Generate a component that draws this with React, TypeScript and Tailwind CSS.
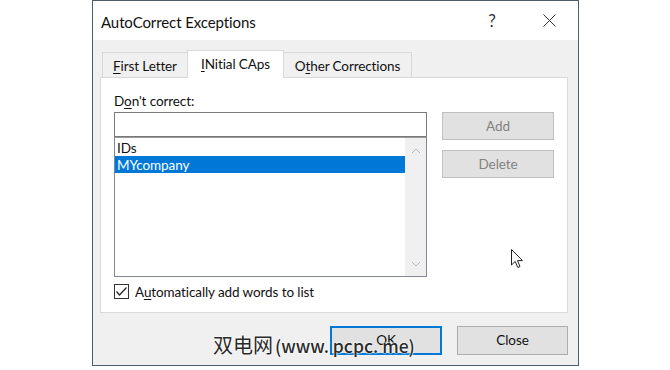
import React from "react";

const Chevron = ({ up }: { up?: boolean }) => (
  <svg width="10" height="6" viewBox="0 0 10 6">
    <polyline
      points={up ? "1,5 5,1 9,5" : "1,1 5,5 9,1"}
      fill="none"
      stroke="#b4b4b4"
      strokeWidth="1"
    />
  </svg>
);

export default function App() {
  return (
    <div
      className="w-[670px] h-[370px] bg-white relative overflow-hidden text-[#111]"
      style={{ fontFamily: 'Lato, "Open Sans", sans-serif' }}
    >
      <div className="ml-[92px] w-[487px] h-[366px] border border-[#4f5d6a] flex flex-col">
        {/* title bar */}
        <div className="h-[39px] bg-white flex items-center pl-[8px] shrink-0">
          <span className="text-[15px] leading-[20px] mt-[2px] tracking-[-0.1px]">AutoCorrect Exceptions</span>
          <div className="ml-auto flex items-center h-full pr-[6px]">
            <div className="w-[46px] h-full flex items-center justify-center text-[17px] text-[#333] pt-[1px]">
              ?
            </div>
            <div className="w-[11px]" />
            <div className="w-[46px] h-full flex items-center justify-center">
              <svg width="13" height="13" viewBox="0 0 13 13">
                <path d="M0.5 0.5 L12.5 12.5 M12.5 0.5 L0.5 12.5" stroke="#333" strokeWidth="1" fill="none" />
              </svg>
            </div>
          </div>
        </div>
        {/* body */}
        <div className="flex-1 bg-[#f0f0f0] pt-[10px] pl-[7px] pr-[10px] pb-[10px] flex flex-col text-[13.5px] tracking-[-0.1px]">
          {/* tabs */}
          <div className="h-[27px] flex items-start pl-[2px] shrink-0">
            <div className="mt-[2px] h-[25px] w-[86px] border border-b-0 border-[#d9d9d9] bg-[#f0f0f0] flex items-center justify-center pt-[3px]">
              <span>
                <span className="underline underline-offset-2">F</span>irst Letter
              </span>
            </div>
            <div className="-ml-px h-[28px] w-[97px] border border-b-0 border-[#d9d9d9] bg-white flex items-center justify-center relative z-10">
              <span>
                <span className="underline underline-offset-2">I</span>Nitial CAps
              </span>
            </div>
            <div className="-ml-px mt-[2px] h-[25px] w-[129px] border border-b-0 border-[#d9d9d9] bg-[#f0f0f0] flex items-center justify-center pt-[3px]">
              <span>
                O<span className="underline underline-offset-2">t</span>her Corrections
              </span>
            </div>
          </div>
          {/* panel */}
          <div className="h-[236px] bg-white border border-[#d9d9d9] flex items-start pl-[13px] pt-[12px] shrink-0">
            <div className="w-[313px] flex flex-col">
              <div className="h-[22px] leading-[22px]">
                D<span className="underline underline-offset-2">o</span>n't correct:
              </div>
              <div className="h-[25px] border border-[#7a7a7a] bg-white" />
              <div className="h-[140px] border border-[#828790] border-t-[#9a9a9a] bg-white flex">
                <div className="flex-1 pt-[1px]">
                  <div className="h-[17px] leading-[18px] pl-[2px]">IDs</div>
                  <div className="h-[17px] leading-[18px] pl-[2px] bg-[#0078d7] text-white">MYcompany</div>
                </div>
                <div className="w-[21px] bg-[#f0f0f0] flex flex-col items-center justify-between pt-[10px] pb-[9px]">
                  <Chevron up />
                  <Chevron />
                </div>
              </div>
              <div className="mt-[6px] h-[17px] flex items-center">
                <div className="w-[15px] h-[15px] border border-[#333] bg-white flex items-center justify-center">
                  <svg width="13" height="13" viewBox="0 0 13 13">
                    <polyline points="1.5,6.5 4.5,10 11.5,2.5" fill="none" stroke="#222" strokeWidth="1.2" />
                  </svg>
                </div>
                <span className="ml-[6px] leading-[18px]">
                  A<span className="underline underline-offset-2">u</span>tomatically add words to list
                </span>
              </div>
            </div>
            <div className="ml-[15px] mt-[22px] w-[112px] flex flex-col">
              <div className="h-[28px] bg-[#e1e1e1] border border-[#bfbfbf] flex items-center justify-center text-[#838383]">
                Add
              </div>
              <div className="mt-[10px] h-[28px] bg-[#e1e1e1] border border-[#bfbfbf] flex items-center justify-center text-[#838383]">
                Delete
              </div>
            </div>
          </div>
          {/* bottom buttons */}
          <div className="mt-[13px] h-[29px] flex justify-end gap-[15px] shrink-0">
            <div className="w-[112px] h-[29px] bg-[#e1e1e1] border-2 border-[#0078d7] flex items-center justify-center">
              OK
            </div>
            <div className="w-[111px] h-[29px] bg-[#e1e1e1] border border-[#adadad] flex items-center justify-center">
              Close
            </div>
          </div>
        </div>
      </div>

      {/* watermark overlay */}
      <div
        className="absolute left-[213px] top-[334px] flex items-baseline leading-[22px] text-[#2a2a2a] whitespace-nowrap [text-shadow:0_0_2px_#fff,0_0_2px_#fff,0_0_1px_#fff]"
        style={{ fontFamily: '"Noto Sans CJK SC", sans-serif' }}
      >
        <span className="text-[20px]">双电网</span>
        <span className="text-[17.5px] ml-[2px] font-medium">(www. pcpc. me)</span>
      </div>

      {/* mouse cursor overlay */}
      <svg className="absolute left-[511px] top-[249px]" width="13" height="20" viewBox="0 0 13 20">
        <path d="M0.5 0.5 L0.5 16 L4.2 12.4 L6.8 18.5 L9 17.5 L6.5 11.6 L11.5 11.6 Z" fill="#fff" stroke="#222" strokeWidth="1" strokeLinejoin="round" />
      </svg>
    </div>
  );
}
